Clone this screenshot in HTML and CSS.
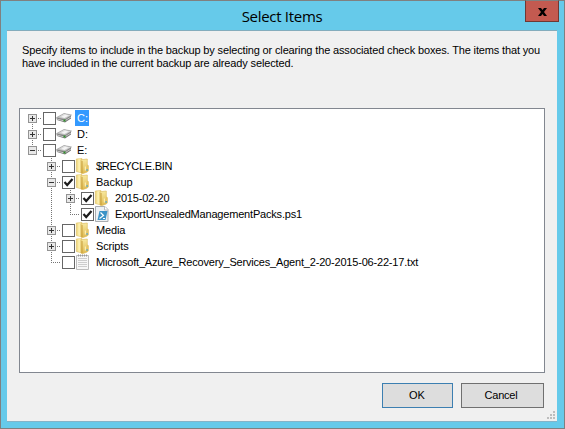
FILE: index.html
```
<!DOCTYPE html>
<html lang="en">
<head>
<meta charset="utf-8">
<title>Select Items</title>
<link rel="stylesheet" href="styles.css">
</head>
<body>
<svg width="0" height="0" class="defs" aria-hidden="true">
  <defs>
    <linearGradient id="gold"><stop offset="0" stop-color="#e9cf70"/><stop offset=".5" stop-color="#fff3b4"/><stop offset="1" stop-color="#ecd27a"/></linearGradient>
    <linearGradient id="gold-front" x2="0" y2="1"><stop offset="0" stop-color="#f8e9a0"/><stop offset="1" stop-color="#dfb94e"/></linearGradient>
    <linearGradient id="steel" x2="0" y2="1"><stop offset="0" stop-color="#eee"/><stop offset="1" stop-color="#b4b4b4"/></linearGradient>
    <symbol id="drive" viewBox="0 0 16 16">
      <path d="M.5 8 8 3.500 15 5v3.500L9 12.500 1 10z" fill="#777"/>
      <path d="M.5 7.500 8 3.500 15.500 5 9 9.500z" fill="url(#steel)" stroke="#999" stroke-width=".6"/>
      <path d="M5 7 9 4.800 12.500 5.500 8.500 8z" fill="#f4f4f4"/>
      <path d="M1 9 8.500 11 15 7" fill="none" stroke="#d0d0d0" stroke-width=".9"/>
      <path d="M7.500 9.500h2v2h-2z" fill="#2f8f2a"/>
    </symbol>
    <symbol id="folder" viewBox="0 0 16 16">
      <path d="M1.300 1 7 .500V15L1.300 13.500z" fill="url(#gold)" stroke="#dfc165" stroke-width=".6"/>
      <path d="M6 2 8 1.500 12.300 1v13L7.500 15.700 6 15z" fill="url(#gold-front)" stroke="#d9b758" stroke-width=".6"/>
      <path d="M7 3v12" stroke="#c79d3a"/>
      <path d="M12 6.500 13.800 7.500v5.500L12 14z" fill="#e6c466"/>
      <path d="M10.300 8.500v4" stroke="#fff6c6"/>
      <path d="M11.500 11h1.200v2h-1.200z" fill="#57a5c9"/>
    </symbol>
    <symbol id="script" viewBox="0 0 16 16">
      <path d="M1.500 .500h9.500l3 3v12H1.500z" fill="#edf1f4" stroke="#a9adb1"/>
      <path d="M10.500 .500v3.500H14" fill="#fff" stroke="#b8bcc0"/>
      <path d="M5.500 5h8l-2 9h-8z" fill="#3c93c6"/>
      <path d="m6.500 6.500 3 3-4 3M9 12.500h2" fill="none" stroke="#fff" stroke-width="1.200"/>
    </symbol>
    <symbol id="text" viewBox="0 0 16 16">
      <path d="M1.500 1.500h12v14h-12z" fill="#f7f7f7" stroke="#bdbdbd"/>
      <path d="M3.500 .500v2M5.500 .500v2M7.500 .500v2M9.500 .500v2M11.500 .500v2" stroke="#999"/>
      <path d="M3 4.500h9M3 6.500h9M3 8.500h9M3 10.500h9M3 12.500h9" stroke="#cdcdcd"/>
    </symbol>
    <symbol id="tick" viewBox="0 0 11 11"><path d="M1.500 5 4.200 8 9.500 2" fill="none" stroke="#1c1c1c" stroke-width="2.200"/></symbol>
  </defs>
</svg>
<div class="window">
  <header class="titlebar">
    <h1 class="title">Select Items</h1>
    <button class="close" aria-label="Close"><svg width="9" height="8" viewBox="0 0 9 8"><path d="M0 0h3l1.500 2L6 0h3L6 4l3 4H6L4.500 6 3 8H0l3-4z"/></svg></button>
  </header>
  <main class="content">
    <p class="intro"><span class="intro-a">Specify items to include in the backup by selecting or clearing the associated check boxes. The items that you</span><br><span class="intro-b">have included in the current backup are already selected.</span></p>
    <div class="tree">
      <div class="row"><i class="cell first"><b class="exp plus"></b></i><i class="check"></i><svg class="icon"><use href="#drive"/></svg><span class="label selected">C:</span></div>
      <div class="row"><i class="cell"><b class="exp plus"></b></i><i class="check"></i><svg class="icon"><use href="#drive"/></svg><span class="label">D:</span></div>
      <div class="row"><i class="cell last"><b class="exp"></b></i><i class="check"></i><svg class="icon"><use href="#drive"/></svg><span class="label">E:</span></div>
      <div class="row"><i class="gap"></i><i class="cell"><b class="exp plus"></b></i><i class="check"></i><svg class="icon"><use href="#folder"/></svg><span class="label recycle">$RECYCLE.BIN</span></div>
      <div class="row"><i class="gap"></i><i class="cell"><b class="exp"></b></i><i class="check"><svg><use href="#tick"/></svg></i><svg class="icon"><use href="#folder"/></svg><span class="label">Backup</span></div>
      <div class="row"><i class="gap"></i><i class="gap line"></i><i class="cell"><b class="exp plus"></b></i><i class="check"><svg><use href="#tick"/></svg></i><svg class="icon"><use href="#folder"/></svg><span class="label date">2015-02-20</span></div>
      <div class="row"><i class="gap"></i><i class="gap line"></i><i class="cell last"></i><i class="check"><svg><use href="#tick"/></svg></i><svg class="icon"><use href="#script"/></svg><span class="label export">ExportUnsealedManagementPacks.ps1</span></div>
      <div class="row"><i class="gap"></i><i class="cell"><b class="exp plus"></b></i><i class="check"></i><svg class="icon"><use href="#folder"/></svg><span class="label media">Media</span></div>
      <div class="row"><i class="gap"></i><i class="cell"><b class="exp plus"></b></i><i class="check"></i><svg class="icon"><use href="#folder"/></svg><span class="label scripts">Scripts</span></div>
      <div class="row"><i class="gap"></i><i class="cell last"></i><i class="check"></i><svg class="icon"><use href="#text"/></svg><span class="label azure">Microsoft_Azure_Recovery_Services_Agent_2-20-2015-06-22-17.txt</span></div>
    </div>
    <div class="actions"><button class="btn ok">OK</button><button class="btn cancel">Cancel</button></div>
    <svg class="grip" width="8" height="8" viewBox="0 0 8 8"><path d="M6 0h2v2H6zM3 3h2v2H3zM6 3h2v2H6zM0 6h2v2H0zM3 6h2v2H3zM6 6h2v2H6z" fill="#bdbdbd"/></svg>
  </main>
</div>
</body>
</html>
```
FILE: styles.css
```
* { box-sizing: border-box; }
body { margin: 0; font: 11px/13px "Liberation Sans", Arial, sans-serif; color: #000; }
.defs { position: absolute; }
.window { width: 565px; height: 429px; border: 1px solid #808080; background: #66caea; padding: 0 7px 6px 6px; display: flex; flex-direction: column; }
.titlebar { position: relative; height: 29px; flex: none; display: flex; justify-content: center; align-items: center; }
.title { margin: 0; font: 15px/20px "Open Sans", "Noto Sans", sans-serif; letter-spacing: -0.3px; }
.close { position: absolute; right: -2px; top: -1px; width: 34px; height: 22px; padding: 1px 0 0; border: 1px solid #6f3834; border-top-color: #808080; background: #c35a50; display: flex; align-items: center; justify-content: center; }
.content { position: relative; flex: 1; background: #f0f0f0; border-top: 1px solid #84acbc; border-bottom: 1px solid #84b4c8; padding: 13px 11px 0 12px; display: flex; flex-direction: column; }
.intro { margin: 0 0 39px; padding-left: 3px; height: 25px; white-space: nowrap; }
.intro-a { letter-spacing: -0.147px; }
.intro-b { letter-spacing: -0.13px; }
.tree { width: 526px; height: 265px; flex: none; border: 1px solid #828790; background: #fff; padding: 1px 0 0 3px; }
.row { height: 16px; display: flex; align-items: center; white-space: nowrap; }
.gap, .cell { width: 19px; height: 16px; flex: none; display: block; }
.line, .cell { background: repeating-linear-gradient(#757575 0 1px, transparent 1px 2px) 9px 0 / 1px 16px no-repeat; }
.cell { position: relative; padding: 4px 0 0 5px; }
.cell.first { background-position: 9px 8px; }
.cell.last { background-size: 1px 8px; }
.cell::after { content: ""; position: absolute; left: 9px; top: 8px; width: 10px; height: 1px; background: repeating-linear-gradient(90deg, #757575 0 1px, transparent 1px 2px); }
.exp { position: relative; z-index: 1; display: block; width: 9px; height: 9px; border: 1px solid #939393; background: linear-gradient(#333, #333) 1px 3px / 5px 1px no-repeat, #e8e8e8; }
.exp.plus { background: linear-gradient(#333, #333) 1px 3px / 5px 1px no-repeat, linear-gradient(#333, #333) 3px 1px / 1px 5px no-repeat, #e8e8e8; }
.check { width: 13px; height: 13px; margin-left: 1px; flex: none; border: 1px solid #666; background: #fff; display: block; }
.check svg { display: block; width: 11px; height: 11px; }
.icon { width: 16px; height: 16px; margin-right: 3px; flex: none; }
.label { height: 16px; padding: 0 1px 0 2px; line-height: 16px; }
.selected { background: #3399ff; color: #fff; }
.recycle { letter-spacing: -0.27px; }
.date, .export, .azure { letter-spacing: -0.19px; }
.media, .scripts { letter-spacing: -0.15px; }
.actions { display: flex; justify-content: flex-end; gap: 8px; margin-top: 10px; padding-right: 2px; }
.btn { height: 25px; padding: 0; font: inherit; color: #000; background: #ddd; border: 1px solid #707070; }
.btn.ok { width: 71px; border-color: #3c7fb1; padding-right: 1px; }
.btn.cancel { width: 83px; padding-right: 3px; letter-spacing: -0.2px; }
.grip { position: absolute; right: 2px; bottom: 2px; }
```
